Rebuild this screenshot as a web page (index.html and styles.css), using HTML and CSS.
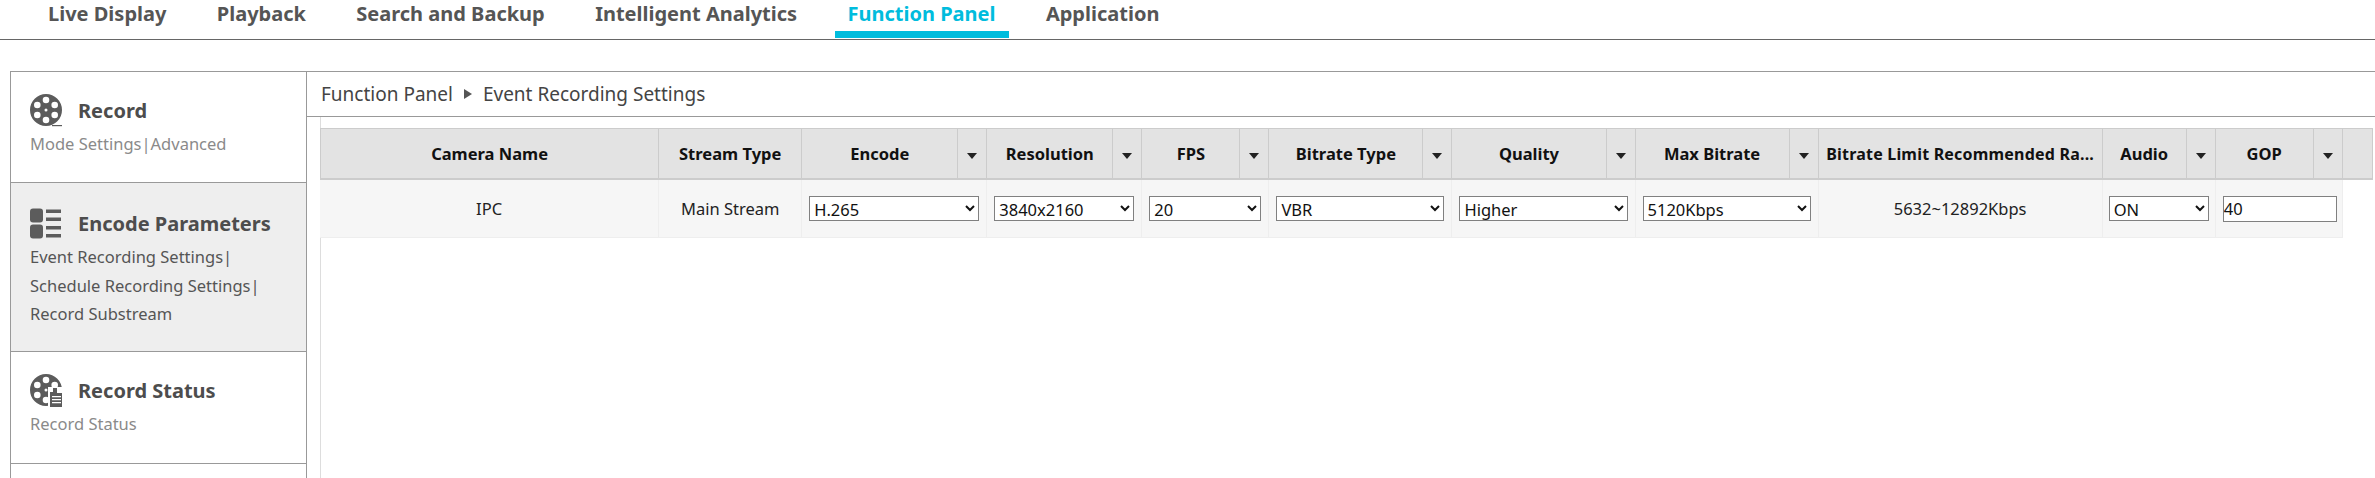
FILE: index.html
```html
<!DOCTYPE html>
<html lang="en">
<head>
  <meta charset="UTF-8" />
  <title>Function Panel</title>
  <link rel="stylesheet" href="styles.css">
</head>
<body>
<nav class="topnav">
  <a class="tab">Live Display</a>
  <a class="tab">Playback</a>
  <a class="tab">Search and Backup</a>
  <a class="tab">Intelligent Analytics</a>
  <a class="tab active">Function Panel</a>
  <a class="tab">Application</a>
</nav>

<main class="panel">
  <!-- left menu -->
  <aside class="sidebar">
    <section class="group group-record">
      <h2 class="group-title">
        <svg class="icon" viewBox="0 0 32 33">
          <path fill="#5c5c5c" fill-rule="evenodd" d="M16 0a16 16 0 1 1 0 32a16 16 0 1 1 0-32zM16 2.700a3.300 3.300 0 1 0 0 6.600a3.300 3.300 0 1 0 0-6.600zM16 22.700a3.300 3.300 0 1 0 0 6.600a3.300 3.300 0 1 0 0-6.600zM7.300 7.700a3.300 3.300 0 1 0 0 6.600a3.300 3.300 0 1 0 0-6.600zM24.700 7.700a3.300 3.300 0 1 0 0 6.600a3.300 3.300 0 1 0 0-6.600zM7.300 17.700a3.300 3.300 0 1 0 0 6.600a3.300 3.300 0 1 0 0-6.600zM24.700 17.700a3.300 3.300 0 1 0 0 6.600a3.300 3.300 0 1 0 0-6.600zM16 14.500a1.500 1.500 0 1 0 0 3a1.500 1.500 0 1 0 0-3z"/>
          <path fill="#5c5c5c" d="M22 31h10v1.200h-10z"/>
        </svg>
        Record
      </h2>
      <p class="group-links">Mode Settings|Advanced</p>
    </section>

    <section class="group group-encode selected">
      <h2 class="group-title">
        <svg class="icon" viewBox="0 0 32 30">
          <rect x="0" y="0" width="13" height="14" rx="3" fill="#5c5c5c"/>
          <rect x="0" y="16" width="13" height="14" rx="3" fill="#5c5c5c"/>
          <rect x="16" y="1" width="15" height="3.500" fill="#5c5c5c"/>
          <rect x="16" y="9" width="15" height="3.500" fill="#5c5c5c"/>
          <rect x="16" y="17.500" width="15" height="3.500" fill="#5c5c5c"/>
          <rect x="16" y="25.500" width="15" height="3.500" fill="#5c5c5c"/>
        </svg>
        Encode Parameters
      </h2>
      <p class="group-links">Event Recording Settings|<br>Schedule Recording Settings|<br>Record Substream</p>
    </section>

    <section class="group group-status">
      <h2 class="group-title">
        <svg class="icon" viewBox="0 0 32 33">
          <path fill="#5c5c5c" fill-rule="evenodd" d="M16 0a16 16 0 1 1 0 32a16 16 0 1 1 0-32zM16 2.700a3.300 3.300 0 1 0 0 6.600a3.300 3.300 0 1 0 0-6.600zM7.300 7.700a3.300 3.300 0 1 0 0 6.600a3.300 3.300 0 1 0 0-6.600zM24.700 7.700a3.300 3.300 0 1 0 0 6.600a3.300 3.300 0 1 0 0-6.600zM7.300 17.700a3.300 3.300 0 1 0 0 6.600a3.300 3.300 0 1 0 0-6.600zM16 22.700a3.300 3.300 0 1 0 0 6.600a3.300 3.300 0 1 0 0-6.600zM16 14.500a1.500 1.500 0 1 0 0 3a1.500 1.500 0 1 0 0-3z"/>
          <path fill="#fff" d="M18 13h15v20h-15z"/>
          <path fill="#5c5c5c" d="M20 18h3v-4h4v5h6v14h-13z"/>
          <path fill="#fff" d="M22 22h9v1.200h-9zM22 25h9v1.200h-9zM22 28h9v1.200h-9z"/>
        </svg>
        Record Status
      </h2>
      <p class="group-links">Record Status</p>
    </section>

    <section class="group group-rest"></section>
  </aside>

  <!-- right content -->
  <div class="content">
    <div class="crumbs">
      <span>Function Panel</span>
      <span class="crumb-arrow"></span>
      <span>Event Recording Settings</span>
    </div>

    <div class="table-area">
      <table class="grid">
        <colgroup>
          <col class="c-name"><col class="c-stream">
          <col class="c-encode"><col class="c-arrow">
          <col class="c-res"><col class="c-arrow">
          <col class="c-fps"><col class="c-arrow">
          <col class="c-type"><col class="c-arrow">
          <col class="c-quality"><col class="c-arrow">
          <col class="c-max"><col class="c-arrow">
          <col class="c-limit">
          <col class="c-audio"><col class="c-arrow">
          <col class="c-gop"><col class="c-arrow">
          <col class="c-fill">
        </colgroup>
        <thead>
          <tr>
            <th>Camera Name</th>
            <th>Stream Type</th>
            <th>Encode</th><th class="menu"><i></i></th>
            <th>Resolution</th><th class="menu"><i></i></th>
            <th>FPS</th><th class="menu"><i></i></th>
            <th>Bitrate Type</th><th class="menu"><i></i></th>
            <th>Quality</th><th class="menu"><i></i></th>
            <th>Max Bitrate</th><th class="menu"><i></i></th>
            <th class="limit">Bitrate Limit Recommended Ra...</th>
            <th>Audio</th><th class="menu"><i></i></th>
            <th>GOP</th><th class="menu"><i></i></th>
            <th class="fill"></th>
          </tr>
        </thead>
        <tbody>
          <tr>
            <td>IPC</td>
            <td>Main Stream</td>
            <td colspan="2"><select class="pick"><option>H.265</option></select></td>
            <td colspan="2"><select class="pick"><option>3840x2160</option></select></td>
            <td colspan="2"><select class="pick"><option>20</option></select></td>
            <td colspan="2"><select class="pick"><option>VBR</option></select></td>
            <td colspan="2"><select class="pick"><option>Higher</option></select></td>
            <td colspan="2"><select class="pick"><option>5120Kbps</option></select></td>
            <td>5632~12892Kbps</td>
            <td colspan="2"><select class="pick pick-audio"><option>ON</option></select></td>
            <td colspan="2"><input class="gop" type="text" value="40"></td>
            <td class="blank"></td>
          </tr>
        </tbody>
      </table>
    </div>
  </div>
</main>
</body>
</html>
```

FILE: styles.css
```css
:root {
  --line: #999;
  --text: #555;
  --cyan: #00bcdd;
  --font: "Noto Sans", "Open Sans", sans-serif;
}

html, body {
  height: 100%;
  margin: 0;
  overflow: hidden;
}

body {
  font-family: var(--font);
  color: var(--text);
  background: #fff;
  display: flex;
  flex-direction: column;
}

/* top tabs */
.topnav {
  display: flex;
  height: 39px;
  flex: none;
  padding-left: 35px;
  border-bottom: 1px solid #666;
}

.tab {
  height: 31px;
  line-height: 27px;
  padding: 0 13px;
  margin-right: 24.400px;
  font-size: 20px;
  font-weight: 700;
  border-bottom: 7px solid transparent;
}

.tab.active {
  color: var(--cyan);
  border-bottom-color: var(--cyan);
}

/* panel */
.panel {
  flex: 1;
  min-height: 0;
  display: flex;
  margin: 31px 0 0 10px;
  border-top: 1px solid var(--line);
}

.sidebar {
  width: 295px;
  flex: none;
  display: flex;
  flex-direction: column;
  border-left: 1px solid var(--line);
  border-right: 1px solid var(--line);
}

.group {
  flex: none;
  padding: 22px 0 0 19px;
  border-bottom: 1px solid var(--line);
  box-sizing: border-box;
}

.group-record { height: 111px; }
.group-encode { height: 169px; padding-top: 24px; }
.group-status { height: 112px; }
.group-rest   { flex: 1; padding: 0; border-bottom: 0; }

.group.selected { background: #eee; }

.group-title {
  display: flex;
  align-items: center;
  gap: 16px;
  margin: 0;
  height: 33px;
  font-size: 20px;
  font-weight: 700;
  color: #4d4d4d;
}

.icon {
  width: 32px;
  height: 33px;
  flex: none;
}

.group-links {
  margin: 3px 0 0;
  font-size: 16.500px;
  line-height: 28.500px;
  color: #8a8a8a;
}

.selected .group-links { color: #555; }

/* breadcrumb */
.content {
  flex: 1;
  min-width: 0;
  display: flex;
  flex-direction: column;
}

.crumbs {
  height: 44px;
  flex: none;
  display: flex;
  align-items: center;
  gap: 11px;
  padding-left: 14px;
  font-size: 19px;
  color: #444;
  border-bottom: 1px solid var(--line);
}

.crumb-arrow {
  width: 0;
  height: 0;
  border-left: 8px solid #555;
  border-top: 5px solid transparent;
  border-bottom: 5px solid transparent;
}

/* table */
.table-area {
  flex: 1;
  margin-left: 13px;
  padding-top: 11px;
  border-left: 1px solid #ddd;
}

.grid {
  table-layout: fixed;
  border-collapse: separate;
  border-spacing: 0;
  width: 2053px;
  margin-left: -1px;
}

.c-name    { width: 339px; }
.c-stream  { width: 143px; }
.c-encode  { width: 156px; }
.c-res     { width: 126px; }
.c-fps     { width: 98px; }
.c-type    { width: 154px; }
.c-quality { width: 154px; }
.c-max     { width: 154px; }
.c-arrow   { width: 29px; }
.c-limit   { width: 284px; }
.c-audio   { width: 84px; }
.c-gop     { width: 98px; }
.c-fill    { width: 30px; }

th {
  height: 49px;
  padding: 0;
  background: #e3e3e3;
  color: #111;
  font-size: 16.500px;
  font-weight: 700;
  white-space: nowrap;
  overflow: hidden;
  border-top: 1px solid #ccc;
  border-right: 1px solid #ccc;
  border-bottom: 2px solid #ccc;
}

th:first-child { border-left: 1px solid #ccc; }

th.limit { font-size: 16px; letter-spacing: 0.200px; }

.menu i {
  display: inline-block;
  width: 0;
  height: 0;
  vertical-align: middle;
  border-top: 6px solid #222;
  border-left: 5px solid transparent;
  border-right: 5px solid transparent;
}

td {
  height: 57px;
  padding: 0;
  background: #f6f6f6;
  color: #222;
  font-size: 16.500px;
  text-align: center;
  border-right: 1px solid #eee;
  border-bottom: 1px solid #eee;
}

td.blank {
  background: #fff;
  border: 0;
}

.pick {
  display: block;
  width: calc(100% - 14px);
  height: 25px;
  margin: 0 7px;
  font-family: var(--font);
  font-size: 16.500px;
  color: #111;
  background: #fff;
  border: 1px solid #808080;
  padding: 0;
}

.pick-audio { margin-left: 6px; width: calc(100% - 12px); }

.gop {
  display: block;
  box-sizing: border-box;
  width: calc(100% - 12px);
  height: 26px;
  margin: 0 5px 0 7px;
  padding: 0;
  font-family: var(--font);
  font-size: 16.500px;
  color: #111;
  border: 1px solid #808080;
}
```
